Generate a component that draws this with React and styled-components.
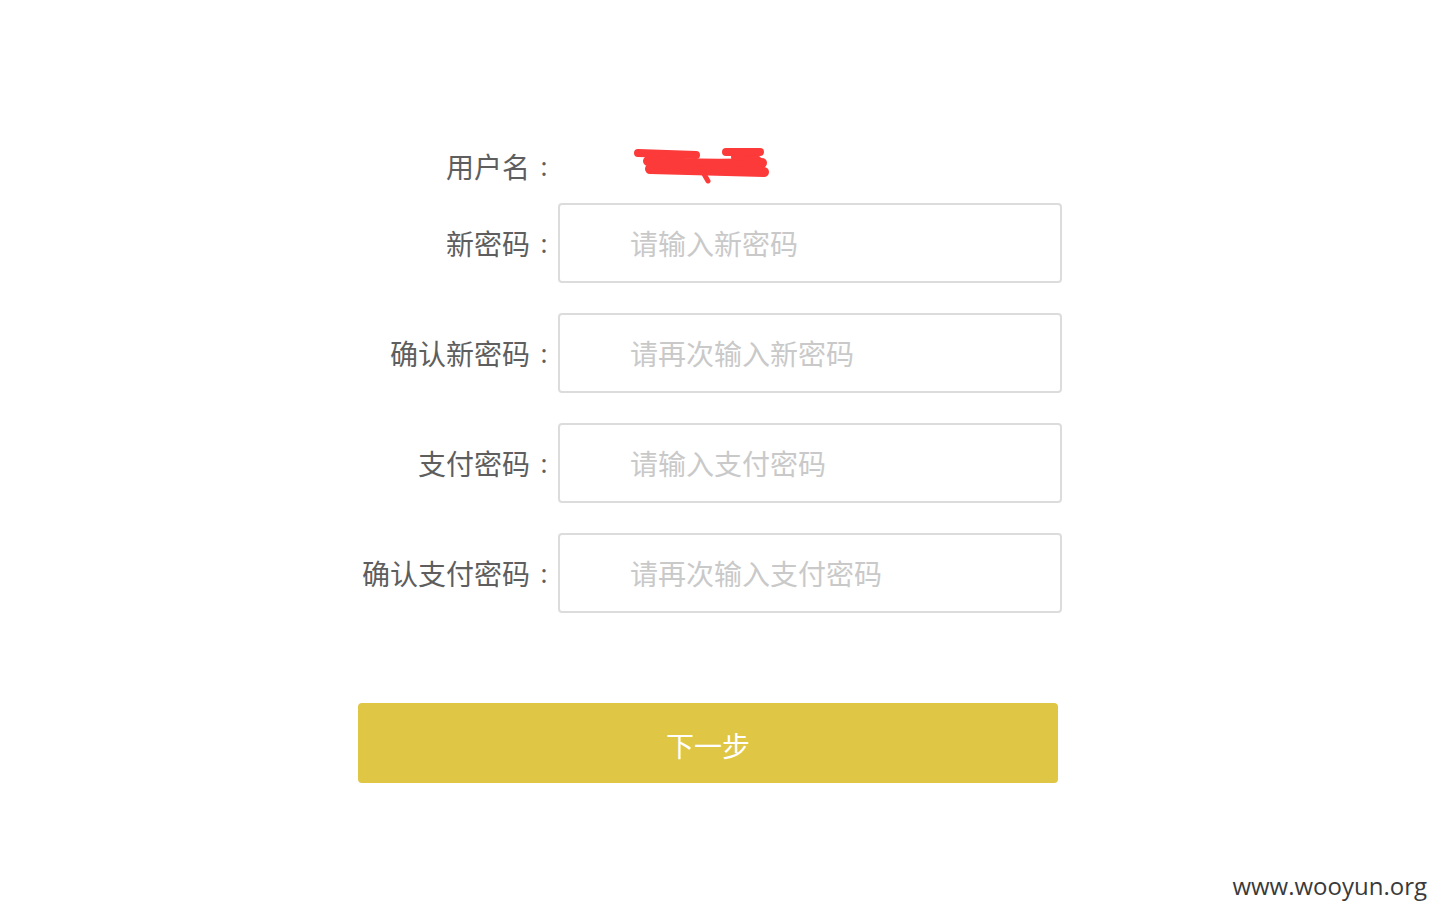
import React from 'react'
import styled, {createGlobalStyle} from 'styled-components'

const GlobalStyle = createGlobalStyle`
  html, body {
    margin: 0;
    padding: 0;
    background: #fff;
  }
  body {
    font-family: "Noto Sans CJK SC", "Noto Sans", sans-serif;
  }
`

const Page = styled.div`
  position: relative;
  width: 1436px;
  height: 915px;
  background: #fff;
  overflow: hidden;
`

const Form = styled.form`
  width: 704px;
  margin-left: 358px;
  padding-top: 146px;
  display: flex;
  flex-direction: column;
`

const Row = styled.div`
  display: flex;
  align-items: center;
  height: ${props => props.tall ? '80px' : '40px'};
  margin-bottom: ${props => props.gap}px;
`

const Label = styled.label`
  width: 200px;
  flex: none;
  display: flex;
  justify-content: flex-end;
  align-items: center;
  font-size: 28px;
  line-height: 1;
  color: #5e5e5e;
  white-space: nowrap;
`

const Colon = styled.span`
  width: 28px;
  text-align: center;
  font-family: "Noto Sans", sans-serif;
  font-size: 26px;
`

const Value = styled.div`
  padding-left: 76px;
  height: 40px;
  display: flex;
  align-items: center;
`

const Input = styled.input`
  box-sizing: border-box;
  width: 504px;
  height: 80px;
  border: 2px solid #dcdcdc;
  border-radius: 4px;
  padding: 0 0 0 70px;
  font-family: "Noto Sans CJK SC", "Noto Sans", sans-serif;
  font-size: 28px;
  color: #333;
  outline: none;
  background: #fff;

  &::placeholder {
    color: #c9c9c9;
  }
`

const Submit = styled.button`
  width: 700px;
  height: 80px;
  padding-top: 4px;
  border: none;
  border-radius: 4px;
  background: #dfc645;
  color: #fff;
  font-family: "Noto Sans CJK SC", "Noto Sans", sans-serif;
  font-size: 28px;
  cursor: pointer;
`

const Watermark = styled.div`
  position: absolute;
  right: 9px;
  bottom: 14px;
  font-family: "Open Sans", "DejaVu Sans", sans-serif;
  font-size: 24px;
  line-height: 1.2;
  color: #3a3a3a;
`

const Scribble = () => (
  <svg width="136" height="38" viewBox="0 0 136 38">
    <g fill="none" stroke="#fc3a3a" strokeLinecap="round" strokeLinejoin="round">
      <path d="M4 6 L62 8" strokeWidth="8" />
      <path d="M92 5 L126 5" strokeWidth="8" />
      <path d="M14 14 Q60 18 128 16" strokeWidth="10" />
      <path d="M16 22 L130 25" strokeWidth="10" />
      <path d="M70 27 L74 34" strokeWidth="5" />
      <path d="M100 10 L124 12" strokeWidth="6" />
    </g>
  </svg>
)

const rows = [
  {label: '新密码', placeholder: '请输入新密码'},
  {label: '确认新密码', placeholder: '请再次输入新密码'},
  {label: '支付密码', placeholder: '请输入支付密码'},
  {label: '确认支付密码', placeholder: '请再次输入支付密码'},
]

export default function App() {
  return (
    <Page>
      <GlobalStyle />
      <Form onSubmit={e => e.preventDefault()}>
        <Row gap={17}>
          <Label>用户名<Colon>:</Colon></Label>
          <Value><Scribble /></Value>
        </Row>
        {rows.map((r, i) => (
          <Row tall key={r.label} gap={i === rows.length - 1 ? 90 : 30}>
            <Label>{r.label}<Colon>:</Colon></Label>
            <Input type="password" placeholder={r.placeholder} />
          </Row>
        ))}
        <Submit type="submit">下一步</Submit>
      </Form>
      <Watermark>www.wooyun.org</Watermark>
    </Page>
  )
}
